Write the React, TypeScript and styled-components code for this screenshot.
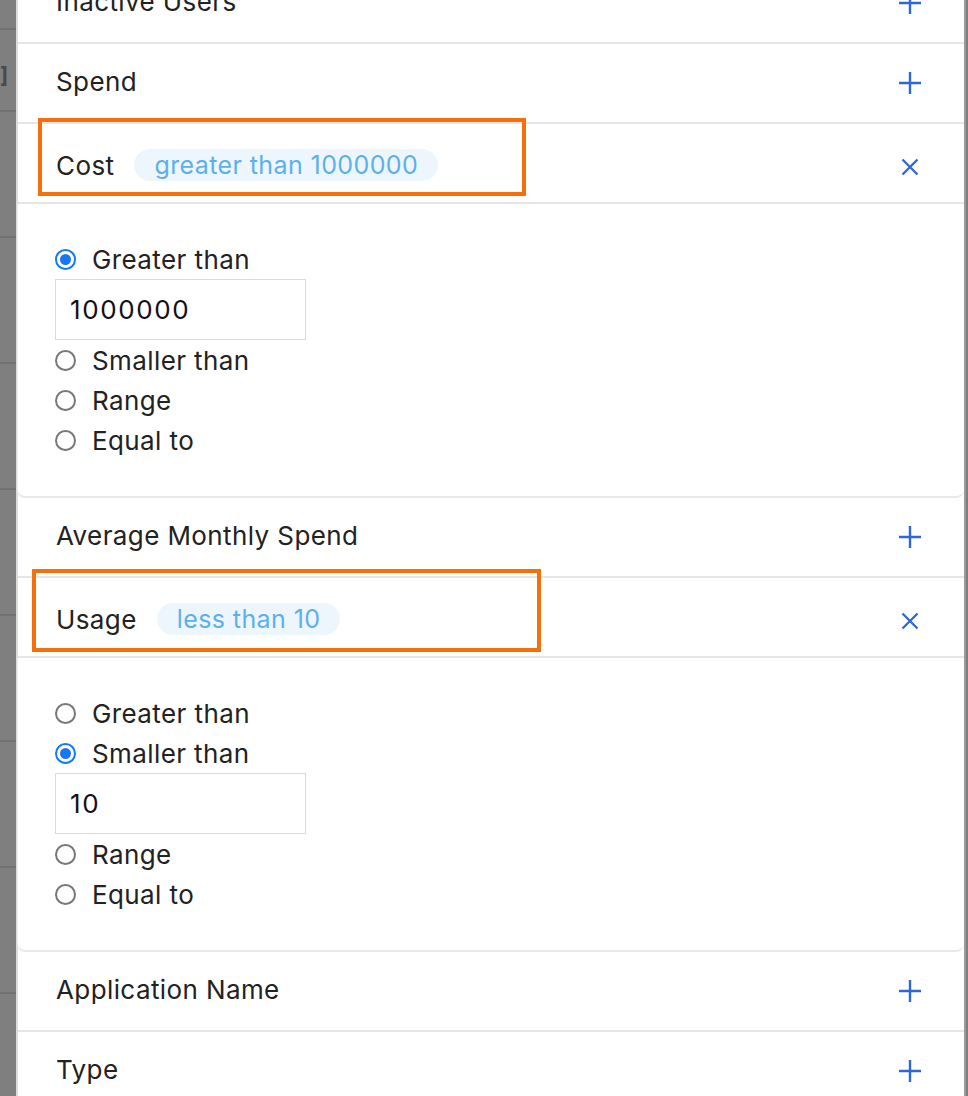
import React from "react";
import styled, { createGlobalStyle } from "styled-components";

const Global = createGlobalStyle`
  html, body { margin: 0; padding: 0; }
  body {
    background: #7f7f7f;
    font-family: Inter, "Noto Sans", sans-serif;
    overflow: hidden;
  }
  * { box-sizing: border-box; }
`;

const Page = styled.div`
  display: flex;
  width: 968px;
  height: 1096px;
  overflow: hidden;
`;

const Backdrop = styled.div`
  width: 16px;
  flex: none;
  background: #7f7f7f;
  display: flex;
  flex-direction: column;
  overflow: hidden;
`;

const BackRow = styled.div<{ $h: number }>`
  height: ${(p) => p.$h}px;
  flex: none;
  border-bottom: 2px solid #717171;
  color: #4a4a4a;
  font-size: 22px;
  font-weight: 700;
  display: flex;
  align-items: center;
  padding-top: 10px;
`;

const Panel = styled.div`
  flex: 1;
  background: #fff;
  border-left: 2px solid #dcdcdc;
  border-right: 2px solid #9a9a9a;
  margin-right: 2px;
  display: flex;
  flex-direction: column;
  margin-top: -36px;
`;

const Item = styled.div`
  display: flex;
  flex-direction: column;
`;

const Header = styled.div<{ $active?: boolean }>`
  position: relative;
  height: 80px;
  flex: none;
  display: flex;
  align-items: center;
  padding: 0 42px 0 38px;
  border-bottom: 2px solid #e6e6e6;
  padding-top: ${(p) => (p.$active ? "4px" : "0")};
  padding-bottom: ${(p) => (p.$active ? "0" : "3px")};
`;

const Title = styled.span`
  font-size: 26px;
  color: #222;
  letter-spacing: 0.4px;
`;

const Chip = styled.span`
  margin-left: 20px;
  height: 32px;
  padding: 0 20px;
  border-radius: 16px;
  background: #edf6fd;
  color: #5db0ee;
  font-size: 25px;
  display: inline-flex;
  align-items: center;
  letter-spacing: 0.4px;
`;

const IconBtn = styled.span`
  margin-left: auto;
  width: 24px;
  height: 24px;
  display: flex;
  align-items: center;
  justify-content: center;
  color: #2e67d8;
  margin-top: 3px;
`;

const Highlight = styled.div<{ $top: number; $left: number; $w: number; $h: number }>`
  position: absolute;
  top: ${(p) => p.$top}px;
  left: ${(p) => p.$left}px;
  width: ${(p) => p.$w}px;
  height: ${(p) => p.$h}px;
  border: 4px solid #f5700c;
  pointer-events: none;
`;

const Body = styled.div`
  padding: 35px 38px 36px 37px;
  border-bottom: 2px solid #e9e9e9;
  border-left: 1px solid #eeeeee;
  border-bottom-left-radius: 8px;
  border-bottom-right-radius: 8px;
  margin-left: -1px;
  display: flex;
  flex-direction: column;
`;

const Option = styled.label`
  height: 40px;
  display: flex;
  align-items: center;
  gap: 16px;
  font-size: 26px;
  color: #222;
  letter-spacing: 0.4px;
`;

const Radio = styled.span<{ $checked?: boolean }>`
  width: 21px;
  height: 21px;
  border-radius: 50%;
  flex: none;
  border: 2px solid ${(p) => (p.$checked ? "#1877f2" : "#777")};
  display: flex;
  align-items: center;
  justify-content: center;
  &::after {
    content: "";
    width: 11px;
    height: 11px;
    border-radius: 50%;
    background: ${(p) => (p.$checked ? "#1877f2" : "transparent")};
  }
`;

const ValueInput = styled.div`
  width: 251px;
  height: 61px;
  border: 1px solid #d9d9d9;
  display: flex;
  align-items: center;
  padding-left: 14px;
  font-size: 26px;
  color: #111;
  letter-spacing: 1.6px;
`;

const Plus = () => (
  <svg width="24" height="24" viewBox="0 0 24 24" fill="none" stroke="currentColor" strokeWidth="2.4" strokeLinecap="butt">
    <path d="M12 1v22M1 12h22" />
  </svg>
);

const Cross = () => (
  <svg width="18" height="18" viewBox="0 0 18 18" fill="none" stroke="currentColor" strokeWidth="2.3">
    <path d="M1.5 1.5l15 15M16.5 1.5l-15 15" />
  </svg>
);

type Opt = { label: string; checked?: boolean; value?: string };

const Options = ({ opts }: { opts: Opt[] }) => (
  <Body>
    {opts.map((o) => (
      <React.Fragment key={o.label}>
        <Option>
          <Radio $checked={o.checked} />
          {o.label}
        </Option>
        {o.value !== undefined && <ValueInput>{o.value}</ValueInput>}
      </React.Fragment>
    ))}
  </Body>
);

const Collapsed = ({ title }: { title: string }) => (
  <Item>
    <Header>
      <Title>{title}</Title>
      <IconBtn>
        <Plus />
      </IconBtn>
    </Header>
  </Item>
);

export default function App() {
  return (
    <Page>
      <Global />
      <Backdrop>
        <BackRow $h={30} />
        <BackRow $h={82}>]</BackRow>
        {Array.from({ length: 8 }).map((_, i) => (
          <BackRow key={i} $h={126} />
        ))}
      </Backdrop>
      <Panel>
        <Collapsed title="Inactive Users" />
        <Collapsed title="Spend" />
        <Item>
          <Header $active>
            <Title>Cost</Title>
            <Chip>greater than 1000000</Chip>
            <IconBtn>
              <Cross />
            </IconBtn>
            <Highlight $top={-6} $left={20} $w={488} $h={78} />
          </Header>
          <Options
            opts={[
              { label: "Greater than", checked: true, value: "1000000" },
              { label: "Smaller than" },
              { label: "Range" },
              { label: "Equal to" },
            ]}
          />
        </Item>
        <Collapsed title="Average Monthly Spend" />
        <Item>
          <Header $active>
            <Title>Usage</Title>
            <Chip>less than 10</Chip>
            <IconBtn>
              <Cross />
            </IconBtn>
            <Highlight $top={-9} $left={14} $w={509} $h={83} />
          </Header>
          <Options
            opts={[
              { label: "Greater than" },
              { label: "Smaller than", checked: true, value: "10" },
              { label: "Range" },
              { label: "Equal to" },
            ]}
          />
        </Item>
        <Collapsed title="Application Name" />
        <Collapsed title="Type" />
      </Panel>
    </Page>
  );
}
